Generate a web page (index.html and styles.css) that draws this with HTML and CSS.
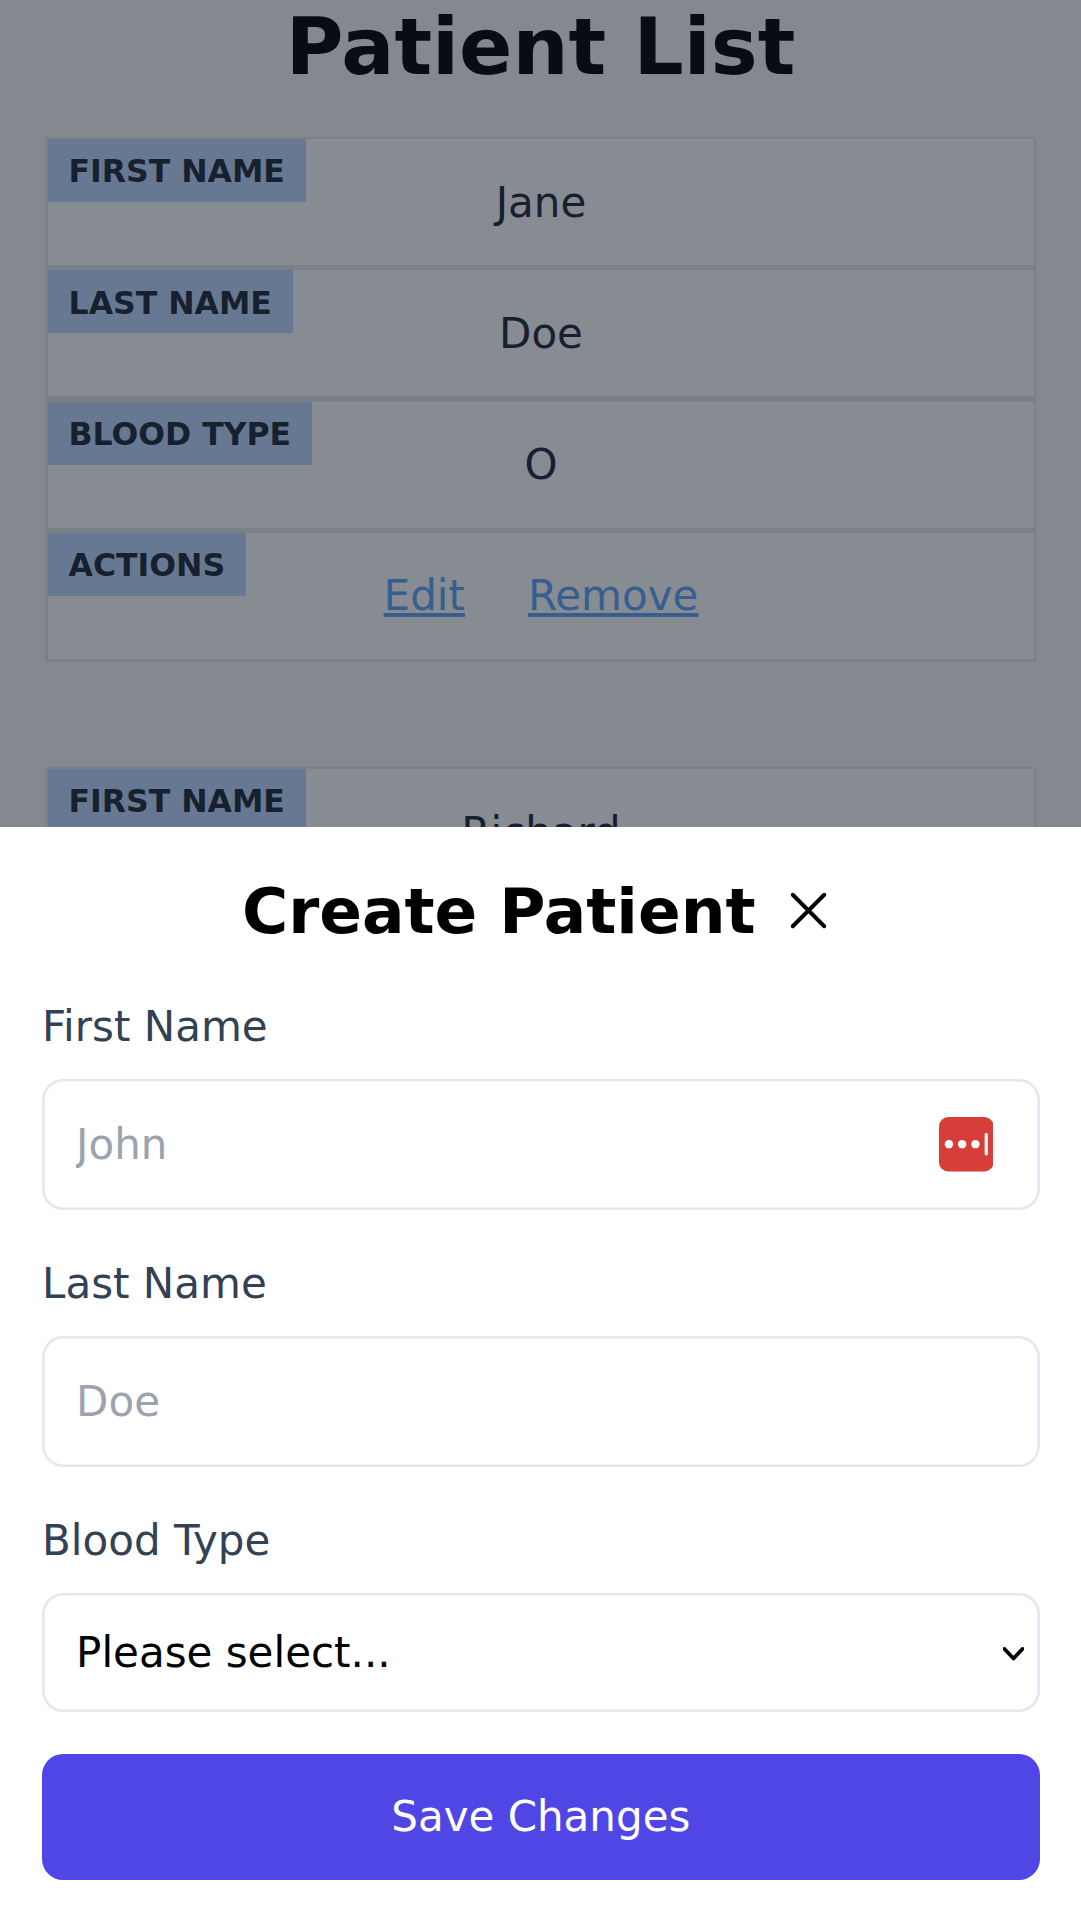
FILE: index.html
```html
<!DOCTYPE html>
<html lang="en">
<head>
<meta charset="utf-8">
<title>Patient List</title>
<link rel="stylesheet" href="styles.css">
</head>
<body>
<div class="screen">
  <main class="page">
    <h1 class="page-title">Patient List</h1>
    <section class="card">
      <div class="row"><span class="tag">FIRST NAME</span>Jane</div>
      <div class="row row-wide"><span class="tag tag-low">LAST NAME</span>Doe</div>
      <div class="row row-raised"><span class="tag">BLOOD TYPE</span>O</div>
      <div class="row row-raised"><span class="tag">ACTIONS</span><a class="link">Edit</a><a class="link">Remove</a></div>
    </section>
    <section class="card">
      <div class="row"><span class="tag">FIRST NAME</span>Richard</div>
    </section>
  </main>
  <div class="backdrop"></div>
  <section class="sheet">
    <header class="sheet-header">
      <h2 class="sheet-title">Create Patient</h2>
      <svg class="close" viewBox="0 0 24 24" fill="none" stroke="currentColor" stroke-width="1.5" stroke-linecap="round"><path d="M6 18L18 6M6 6l12 12"/></svg>
    </header>
    <form class="form">
      <div class="group">
        <label class="label" for="first">First Name</label>
        <div class="field">
          <input class="input" id="first" placeholder="John">
          <svg class="vault" viewBox="0 0 55 55"><rect width="55" height="55" rx="9.5" fill="#d73e3a"/><g fill="#fff"><circle cx="10" cy="27.4" r="4.2"/><circle cx="23.3" cy="27.4" r="4.2"/><circle cx="36.7" cy="27.4" r="4.2"/><rect x="46" y="16.2" width="3.2" height="22.6" rx="1.5"/></g></svg>
        </div>
      </div>
      <div class="group">
        <label class="label" for="last">Last Name</label>
        <div class="field"><input class="input" id="last" placeholder="Doe"></div>
      </div>
      <div class="group">
        <span class="label">Blood Type</span>
        <div class="field field-select">
          <span class="choice">Please select...</span>
          <svg class="chevron" viewBox="0 0 21 14" fill="none" stroke="#000" stroke-width="3.8" stroke-linejoin="round" stroke-linecap="round"><path d="M1.5 2L10.5 11.5L19.5 2"/></svg>
        </div>
      </div>
      <button class="save" type="button">Save Changes</button>
    </form>
  </section>
</div>
</body>
</html>
```
FILE: styles.css
```css
* { box-sizing: border-box; }
body {
  margin: 0;
  font: 42px/63px "DejaVu Sans", sans-serif;
  color: #1f2937;
}
.screen {
  position: relative;
  width: 1081px;
  height: 1921px;
  overflow: hidden;
  background: #f9fafb;
}
.page { padding: 0 45px; }
.page-title {
  margin: 0 0 42.5px;
  font-size: 78.75px;
  line-height: 94.5px;
  text-align: center;
  color: #000;
}
.card {
  width: 991px;
  margin-bottom: 105px;
  background: #fff;
}
.row {
  position: relative;
  display: flex;
  align-items: center;
  justify-content: center;
  gap: 63px;
  height: 131px;
  border: solid #e5e7eb;
  border-width: 2px 2px 3px 3px;
}
.row-wide { height: 132px; border-bottom-width: 4px; }
.row-raised { padding-bottom: 2px; }
.tag {
  position: absolute;
  top: 0;
  left: 0;
  height: 63px;
  padding: 10.5px 21px 10.5px 20.6px;
  font-size: 31.5px;
  line-height: 42px;
  font-weight: 700;
  background: #bfdbfe;
}
.tag-low { padding-top: 11.5px; }
.link { color: #60a5fa; text-decoration: underline; }
.backdrop {
  position: absolute;
  inset: 0;
  background: rgba(15, 23, 37, 0.5);
}
.sheet {
  position: absolute;
  left: 0;
  right: 0;
  bottom: 0;
  height: 1094px;
  padding: 41.6px 41.4px 0 42px;
  background: #fff;
}
.sheet-header {
  display: flex;
  align-items: center;
  justify-content: center;
  gap: 21px;
  height: 84px;
  margin-bottom: 42px;
  color: #000;
}
.sheet-title { margin: 0; padding-top: 2px; font-size: 63px; line-height: 84px; }
.close { width: 63px; height: 63px; }
.form { display: flex; flex-direction: column; gap: 42px; }
.group { display: flex; flex-direction: column; gap: 21px; }
.label { color: #334155; }
.field {
  display: flex;
  align-items: center;
  height: 131px;
  padding: 0 46.2px 0 34.1px;
  box-shadow: inset 0 0 0 2.6px #e2e8f0;
  border-radius: 21px;
}
.input {
  flex: 1;
  min-width: 0;
  height: 63px;
  padding: 0;
  border: 0;
  outline: 0;
  background: none;
  font: inherit;
}
.input::placeholder { color: #9ca3af; opacity: 1; }
.vault { width: 54.6px; height: 54.6px; margin-top: 1px; }
.field-select {
  justify-content: space-between;
  height: 119.2px;
  padding-right: 15.5px;
}
.choice { padding-top: 1px; color: #000; }
.chevron { width: 21px; height: 14px; margin-top: 3px; }
.save {
  height: 126px;
  padding: 0 0 1px;
  border: 0;
  border-radius: 21px;
  background: #4f46e5;
  color: #fff;
  font: inherit;
}
```
